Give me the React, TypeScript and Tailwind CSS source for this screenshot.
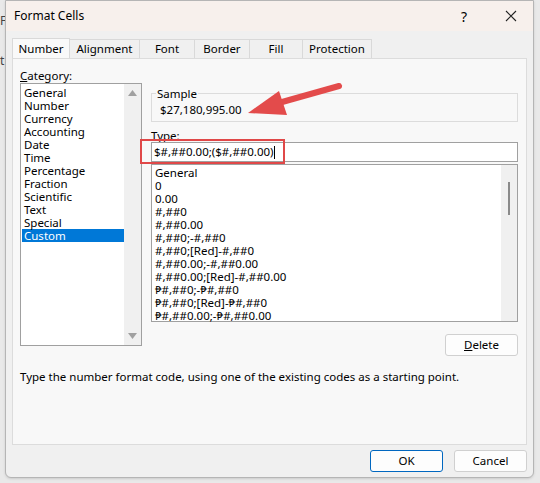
import React from "react";

const cats = ["General","Number","Currency","Accounting","Date","Time","Percentage","Fraction","Scientific","Text","Special","Custom"];
const types = ["General","0","0.00","#,##0","#,##0.00","#,##0;-#,##0","#,##0;[Red]-#,##0","#,##0.00;-#,##0.00","#,##0.00;[Red]-#,##0.00","₱#,##0;-₱#,##0","₱#,##0;[Red]-₱#,##0","₱#,##0.00;-₱#,##0.00"];
const tabs = ["Alignment","Font","Border","Fill","Protection"];
const tabW = [70,55,55,53,69];

export default function App() {
  return (
    <div className="w-[540px] h-[483px] bg-[#e9e9e9] relative overflow-hidden text-[11.5px] text-black" style={{fontFamily:'"Segoe UI","Noto Sans","Open Sans",sans-serif'}}>
      <div className="absolute left-0 top-[12px] text-[12px] text-[#444]">F</div>
      <div className="absolute left-0 top-[52px] text-[12px] text-[#444]">t</div>
      <div className="absolute left-[5px] top-0 w-[529px] h-[478px] bg-[#f0f0f0] border border-[#b5b5b5] rounded-b-[6px] flex flex-col shadow">
        <div className="h-[30px] bg-[#f7f0ec] flex items-center px-[8px] shrink-0">
          <span className="text-[12px]">Format Cells</span>
          <span className="ml-auto mr-[38px] text-[14px]">?</span>
          <svg width="12" height="12" viewBox="0 0 12 12" className="mr-[8px]"><path d="M1 1L11 11M11 1L1 11" stroke="#222" strokeWidth="1.1"/></svg>
        </div>
        <div className="flex items-end pl-[6px] h-[27px] shrink-0">
          <div className="w-[58px] h-[21px] bg-[#f9f9f9] border border-b-0 border-[#d9d9d9] flex items-center justify-center relative top-[1px]">Number</div>
          {tabs.map((t,i)=>(
            <div key={t} style={{width:tabW[i]}} className="h-[19px] border border-b-0 border-l-0 border-[#d9d9d9] flex items-center justify-center">{t}</div>
          ))}
        </div>
        <div className="mx-[6px] h-[387px] bg-[#f8f8f8] border border-[#dcdcdc] relative flex flex-col px-[7px] pt-[8px]">
          <div className="flex gap-[9px]">
            <div className="flex flex-col w-[122px]">
              <div className="h-[16px]"><u>C</u>ategory:</div>
              <div className="h-[263px] bg-white border border-[#a0a0a0] flex">
                <div className="flex-1 pt-[2px] pl-[1px]">
                  {cats.map(c=>(
                    <div key={c} className={"h-[13px] leading-[13px] pl-[2px] " + (c==="Custom"?"bg-[#0078d7] text-white":"")}>{c}</div>
                  ))}
                </div>
                <div className="w-[17px] bg-[#f0f0f0] flex flex-col items-center justify-between py-[6px]">
                  <svg width="9" height="6"><path d="M0 6L4.5 0L9 6Z" fill="#a0a0a0"/></svg>
                  <svg width="9" height="6"><path d="M0 0L4.5 6L9 0Z" fill="#a0a0a0"/></svg>
                </div>
              </div>
            </div>
            <div className="flex flex-col w-[367px] pt-[26px]">
              <div className="h-[29px] border border-[#dcdcdc] relative pl-[8px] pt-[7px]">
                <span className="absolute left-[4px] top-[-9px] bg-[#f8f8f8] px-[1px]">Sample</span>
                $27,180,995.00
              </div>
              <div className="mt-[5px] h-[15px]">Type:</div>
              <div className="relative h-[20px] bg-white border border-[#a0a0a0] flex items-center pl-[2px]">
                $#,##0.00;($#,##0.00)<span className="inline-block w-px h-[13px] bg-black"/>
                <div className="absolute left-[-12px] top-[-4px] w-[145px] h-[25px] border-[2px] border-[#e04848]"/>
              </div>
              <div className="mt-[2px] h-[158px] bg-white border border-[#a0a0a0] flex">
                <div className="flex-1 pt-[1px] pl-[3px]">
                  {types.map(t=>(<div key={t} className="h-[13px] leading-[13px]">{t}</div>))}
                </div>
                <div className="w-[16px] bg-[#f0f0f0] flex justify-center pt-[17px]">
                  <div className="w-[2px] h-[33px] bg-[#8a8a8a]"/>
                </div>
              </div>
              <div className="flex justify-end mt-[12px]">
                <div className="w-[73px] h-[22px] bg-[#fdfdfd] border border-[#d0d0d0] rounded-[3px] flex items-center justify-center"><u>D</u>elete</div>
              </div>
            </div>
          </div>
          <div className="mt-[12px]">Type the number format code, using one of the existing codes as a starting point.</div>
          <svg className="absolute left-[222px] top-[20px]" width="120" height="40" viewBox="0 0 120 40">
            <path d="M104 7L40 25" stroke="#e34b4b" strokeWidth="6" strokeLinecap="round"/>
            <path d="M13 34L44 12L52 36Z" fill="#e34b4b"/>
          </svg>
        </div>
        <div className="flex justify-end gap-[11px] mr-[6px] mt-[5px]">
          <div className="w-[73px] h-[22px] bg-[#fdfdfd] border border-[#0067c0] rounded-[3px] flex items-center justify-center">OK</div>
          <div className="w-[73px] h-[22px] bg-[#fdfdfd] border border-[#d0d0d0] rounded-[3px] flex items-center justify-center">Cancel</div>
        </div>
      </div>
    </div>
  );
}
